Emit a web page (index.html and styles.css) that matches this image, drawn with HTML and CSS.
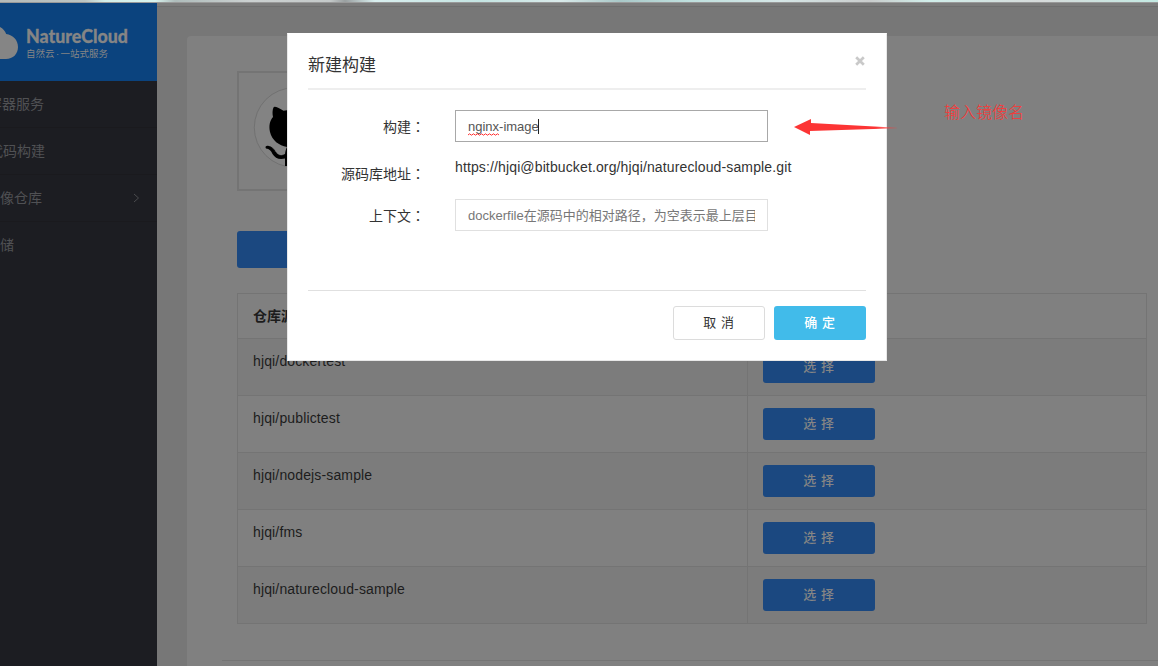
FILE: index.html
```html
<!DOCTYPE html>
<html lang="zh-CN">
<head>
<meta charset="utf-8">
<title>NatureCloud</title>
<link rel="stylesheet" href="styles.css">
</head>
<body>
<div class="strip"></div>
<div class="app">
  <aside class="sidebar">
    <div class="brand">
      <svg class="cloud" width="18" height="40" viewBox="0 0 18 40"><path d="M0 6C3 7.500 5 10 6.200 13C13 14 18 19 18 26C18 33 13 38 6 38H0Z" fill="#858585"/></svg>
      <div class="brand-text">
        <svg class="wordmark" width="106" height="20" viewBox="0 0 106 20"><text x="0" y="15.500" textLength="102" lengthAdjust="spacingAndGlyphs">NatureCloud</text></svg>
        <div class="slogan">自然云<span class="dot">·</span>一站式服务</div>
      </div>
    </div>
    <nav class="menu">
      <div class="item i1">容器服务</div>
      <div class="item i2">代码构建</div>
      <div class="item i3"><span>镜像仓库</span><svg class="chev" width="7" height="10" viewBox="0 0 7 10"><path d="M1 1L5.500 5L1 9" fill="none" stroke="#4a4b4e"/></svg></div>
      <div class="item i4">存储</div>
    </nav>
  </aside>
  <main class="main">
    <section class="panel">
      <div class="avatar">
        <svg width="116" height="116" viewBox="239 73 116 116">
          <circle cx="294" cy="127.500" r="39.700" fill="#838383" stroke="#717171"/>
          <path d="M273.500 107.500C274 106 277 106.500 283.500 110.800C290 109.500 298 109.500 304.500 110.800C311 106.500 315 106 315.500 107.500C317 111 316.500 114 316 117C320 123 320 132 317 138C314 144 308 146.500 302 147V166H285V158.500C279 160 275 158 272.500 154C271 150.500 269.500 149 266 148.500C264.800 147 266 145.500 268 145.800C272 146.500 274 149 276 152C278.500 155.500 282 156 285 154C285.300 151 286 149 287 147C279 145.500 272 140.500 270 132C268.800 126 269.500 121 273 117C272.300 114 272.300 110 273.500 107.500Z" fill="#000"/>
          <path d="M273 148.500L276.500 153L280 155L285 154.500" fill="none" stroke="#666" stroke-width=".8" stroke-dasharray="1 2"/>
        </svg>
      </div>
      <div class="primary"></div>
      <div class="table">
        <div class="row head"><div class="cell name">仓库源</div><div class="cell"></div></div>
        <div class="row odd"><div class="cell name split">hjqi/dockertest</div><div class="cell"><div class="pick">选 择</div></div></div>
        <div class="row"><div class="cell name split">hjqi/publictest</div><div class="cell"><div class="pick">选 择</div></div></div>
        <div class="row odd"><div class="cell name split">hjqi/nodejs-sample</div><div class="cell"><div class="pick">选 择</div></div></div>
        <div class="row"><div class="cell name split">hjqi/fms</div><div class="cell"><div class="pick">选 择</div></div></div>
        <div class="row odd"><div class="cell name split">hjqi/naturecloud-sample</div><div class="cell"><div class="pick">选 择</div></div></div>
      </div>
      <div class="rule"></div>
    </section>
  </main>
</div>

<div class="modal">
  <div class="modal-head">
    <span class="title">新建构建</span>
    <svg class="close" width="10" height="10" viewBox="0 0 10 10"><path d="M1.200 1.200L8.800 8.800M8.800 1.200L1.200 8.800" stroke="#c9c9c9" stroke-width="2.700"/></svg>
  </div>
  <div class="form">
    <div class="field f1"><div class="label">构建<span class="colon" lang="zh-TW">：</span></div><div class="box active"><span class="typo">nginx<svg class="squiggle" width="31" height="3" viewBox="0 0 31 3"><path d="M0 2L1.500 .8L3.500 2.200L5.500 .8L7.500 2.200L9.500 .8L11.500 2.200L13.500 .8L15.500 2.200L17.500 .8L19.500 2.200L21.500 .8L23.500 2.200L25.500 .8L27.500 2.200L29.500 .8L31 2" fill="none" stroke="#f33"/></svg></span>-image<i class="caret"></i></div></div>
    <div class="field f2"><div class="label">源码库地址<span class="colon" lang="zh-TW">：</span></div><div class="url">https://hjqi@bitbucket.org/hjqi/naturecloud-sample.git</div></div>
    <div class="field f3"><div class="label">上下文<span class="colon" lang="zh-TW">：</span></div><div class="box hint"><div class="clip">dockerfile在源码中的相对路径，为空表示最上层目录</div></div></div>
  </div>
  <div class="modal-foot">
    <div class="btn cancel">取 消</div>
    <div class="btn ok">确 定</div>
  </div>
</div>

<svg class="arrow" width="110" height="20" viewBox="790 117 110 20">
  <defs><linearGradient id="fade" gradientUnits="userSpaceOnUse" x1="876" y1="0" x2="899" y2="0"><stop offset="0" stop-color="#fc3535"/><stop offset="1" stop-color="#fc3535" stop-opacity=".3"/></linearGradient></defs>
  <path d="M794 127L811 119V123L897 127.700V128.300L810 131V135Z" fill="url(#fade)"/>
</svg>
<div class="note">输入镜像名</div>
</body>
</html>
```
FILE: styles.css
```css
* { box-sizing: border-box; }
body {
  margin: 0;
  width: 1158px;
  height: 666px;
  overflow: hidden;
  position: relative;
  background: #777;
  font: 14px/20px "Liberation Sans", "Noto Sans CJK SC", sans-serif;
  color: #1c1c1c;
}
.strip {
  height: 3px;
  border-bottom: 1px solid #999;
  background: linear-gradient(90deg, #b5bab9 0, #bcc5c3 85px, #d3eee9 105px, #d8f3ee 155px, #aebcbb 175px, #cbd0d0 250px, #c4c9c9 330px, #999fa0 345px, #d8eeee 375px, #c4e4e2 480px, #d9eaea 560px, #a9c8c8 620px, #bfe0de 690px, #d5e6e6 780px, #c9cccc 870px, #d0eeea 930px, #d6dada 1040px, #c3eae3 1158px);
}
.app { display: flex; height: 663px; }
.sidebar { width: 157px; background: #1c1d22; overflow: hidden; flex: none; }
.brand {
  height: 78px;
  background: #0b437e;
  display: flex;
  gap: 8px;
  padding-top: 18px;
}
.brand-text { padding-top: 6px; }
.wordmark { display: block; overflow: visible; }
.wordmark text { font: 900 18.5px Lato, sans-serif; fill: #858585; stroke: #858585; stroke-width: .3px; }
.slogan { font-size: 9.5px; line-height: 13px; color: #858585; white-space: nowrap; }
.dot { display: inline-block; width: 6px; text-align: center; }
.item {
  height: 47px;
  line-height: 46px;
  border-bottom: 1px solid #1a1a1e;
  color: #505154;
  white-space: nowrap;
}
.i1 { text-indent: -12px; }
.i2 { text-indent: -11px; }
.i3 { text-indent: -14px; display: flex; align-items: center; justify-content: space-between; padding-right: 17px; }
.i4 { text-indent: -14px; border-bottom: 0; }
.main { flex: 1; border-top: 3px solid #7b7b7b; padding: 30px 0 0 30px; box-shadow: inset 0 1px #6e6e6e; }
.panel { background: #808080; height: 630px; border-radius: 4px 0 0 0; padding: 35px 0 0 50px; }
.avatar { width: 120px; height: 120px; border: 2px solid #747474; }
.avatar svg { display: block; }
.primary { width: 112px; height: 37px; margin-top: 40px; background: #1b4880; border-radius: 3px; }
.table { width: 910px; margin-top: 25px; border: 1px solid #747474; border-bottom: 0; }
.row { display: flex; height: 57px; border-bottom: 1px solid #747474; }
.head { height: 45px; font-weight: bold; }
.odd { background: #7c7c7c; }
.cell { padding: 12px 15px; }
.name { width: 510px; }
.split { border-right: 1px solid #747474; letter-spacing: .14px; }
.pick {
  width: 112px;
  height: 32px;
  background: #1b4880;
  color: #858585;
  border-radius: 3px;
  text-align: center;
  line-height: 31px;
  font-size: 13px;
  font-weight: 500;
  letter-spacing: .6px;
}
.rule { height: 1px; margin: 36px 0 0 -15px; background: #747474; }

.modal {
  position: absolute;
  left: 287px;
  top: 33px;
  width: 600px;
  height: 328px;
  background: #fff;
  border: 1px solid #e8e8e8;
  border-top-color: #fff;
  padding: 0 20px;
  color: #333;
}
.modal-head { height: 56px; border-bottom: 2px solid #eee; display: flex; justify-content: space-between; padding-top: 18px; }
.title { font-size: 17px; line-height: 28px; }
.close { margin-top: 4px; margin-right: 1px; }
.form { height: 200px; padding-top: 20px; }
.field { display: flex; gap: 30px; }
.label { width: 117px; text-align: right; white-space: nowrap; }
.colon { font-family: "Noto Sans CJK TC", sans-serif; }
.f1 { height: 47px; }
.f1 .label, .f3 .label { padding-top: 6px; }
.f2 { height: 42px; }
.f2 .label { padding-top: 6px; }
.url { white-space: nowrap; letter-spacing: .13px; }
.box { width: 313px; height: 32px; border: 1px solid #e0e0e0; padding: 0 12px; font-size: 13px; line-height: 31px; color: #555; }
.active { border-color: #a8a8a8; }
.hint { color: #777; }
.clip { overflow: hidden; white-space: nowrap; width: 287px; }
.typo { position: relative; }
.squiggle { position: absolute; left: 0; bottom: -2px; }
.caret { display: inline-block; width: 1px; height: 15px; margin-left: -1px; background: #222; vertical-align: -3px; }
.modal-foot { border-top: 1px solid #e0e0e0; padding-top: 15px; display: flex; justify-content: flex-end; gap: 9px; }
.btn { width: 92px; height: 34px; border-radius: 3px; text-align: center; line-height: 33px; font-size: 13px; letter-spacing: .6px; }
.cancel { border: 1px solid #dcdcdc; line-height: 31px; }
.ok { background: #41bbea; color: #fff; font-weight: 500; }
.arrow { position: absolute; left: 790px; top: 117px; }
.note { position: absolute; left: 944px; top: 99px; font: 300 16px/24px "Noto Sans CJK SC", sans-serif; color: #fc3535; white-space: nowrap; }
```
